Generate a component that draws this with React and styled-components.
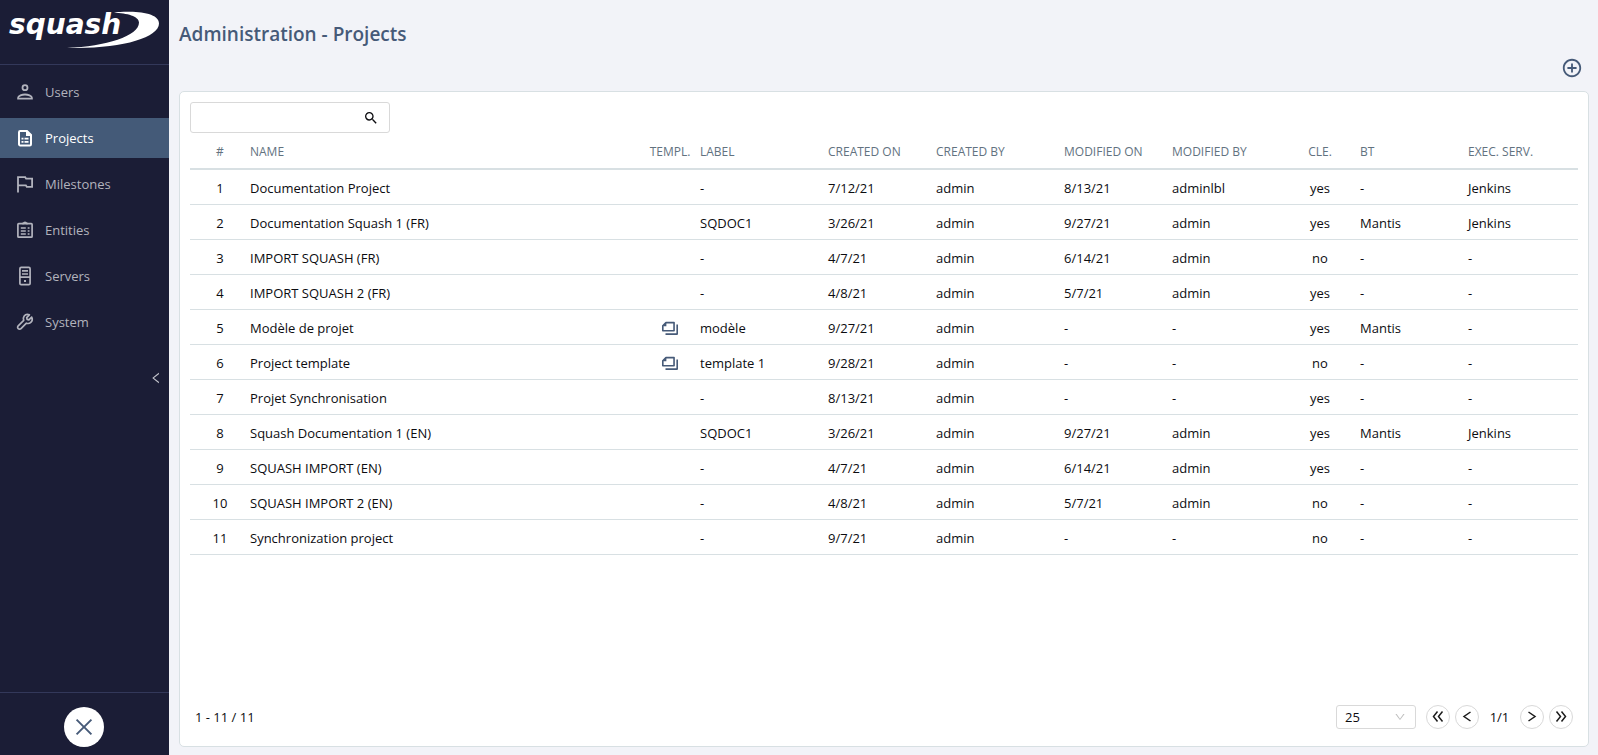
import styled, { createGlobalStyle } from "styled-components";
import { AiOutlineClose, AiOutlineLeft, AiOutlineDown } from "react-icons/ai";
import { MdSearch, MdAddCircleOutline } from "react-icons/md";

const colors = {
  navy: "#1b1d36",
  navyLine: "#33385a",
  active: "#445a78",
  primary: "#465a78",
  page: "#f2f3f8",
  line: "#d8e0e3",
  control: "#d9d9d9",
  heading: "#62727f",
  text: "#0c0c10",
};

const GlobalStyle = createGlobalStyle`
  * {
    box-sizing: border-box;
  }

  body {
    margin: 0;
    background: ${colors.page};
    color: ${colors.text};
    font-family: "Open Sans", "Noto Sans", sans-serif;
    font-size: 13px;
    line-height: 20px;
  }

  button, input, select {
    font: inherit;
    color: inherit;
  }
`;

const Layout = styled.div`
  display: grid;
  grid-template-columns: 169px 1fr;
  min-height: 100vh;
`;

const Sidebar = styled.aside`
  display: flex;
  flex-direction: column;
  background: ${colors.navy};
`;

const Brand = styled.a`
  display: block;
  height: 65px;
  padding: 4px 3px;
  border-bottom: 1px solid ${colors.navyLine};

  svg {
    display: block;
  }
`;

const Nav = styled.nav`
  display: flex;
  flex-direction: column;
  gap: 6px;
  padding-top: 7px;
`;

const NavItem = styled.a`
  display: flex;
  align-items: center;
  gap: 10px;
  height: 40px;
  padding: 0 15px;
  color: ${({ $active }) => ($active ? "#fff" : "#b2b3bd")};
  background: ${({ $active }) => ($active ? colors.active : "transparent")};
  text-decoration: none;
`;

const IconButton = styled.button`
  display: flex;
  align-items: center;
  justify-content: center;
  padding: 0;
  border: none;
  background: none;
  cursor: pointer;
`;

const CollapseButton = styled(IconButton)`
  align-self: flex-end;
  margin: 24px 5px 0 0;
  width: 16px;
  height: 24px;
  color: #c4c5cd;
`;

const SidebarFooter = styled.div`
  display: flex;
  justify-content: center;
  margin-top: auto;
  padding: 14px 1px 8px 0;
  border-top: 1px solid ${colors.navyLine};
`;

const CloseButton = styled(IconButton)`
  width: 40px;
  height: 40px;
  border-radius: 50%;
  background: #fff;
  color: ${colors.primary};
`;

const Main = styled.main`
  display: flex;
  flex-direction: column;
  min-width: 0;
  padding: 20px 9px 8px 10px;
`;

const Title = styled.h1`
  margin: 0;
  color: ${colors.primary};
  font-size: 19px;
  font-weight: 600;
  line-height: 28px;
`;

const Toolbar = styled.div`
  display: flex;
  justify-content: flex-end;
  padding: 9px 6px 12px;
  color: ${colors.primary};
`;

const Panel = styled.section`
  flex: 1;
  display: flex;
  flex-direction: column;
  padding: 10px;
  background: #fff;
  border: 1px solid ${colors.line};
  border-radius: 5px;
`;

const SearchBox = styled.label`
  display: flex;
  align-items: center;
  width: 200px;
  height: 31px;
  padding: 0 10px;
  border: 1px solid ${colors.control};
  border-radius: 3px;
`;

const SearchInput = styled.input`
  flex: 1;
  min-width: 0;
  border: none;
  outline: none;
  background: none;
`;

const Table = styled.table`
  width: 100%;
  table-layout: fixed;
  border-collapse: separate;
  border-spacing: 0;
`;

const HeadCell = styled.th`
  height: 37px;
  padding: 2px 0 0;
  border-bottom: 2px solid ${colors.line};
  color: ${colors.heading};
  font-size: 12px;
  font-weight: 500;
  text-align: ${({ $center }) => ($center ? "center" : "left")};
  white-space: nowrap;
`;

const Cell = styled.td`
  height: 35px;
  padding: 2px 0 0;
  border-bottom: 1px solid ${colors.line};
  text-align: ${({ $center }) => ($center ? "center" : "left")};
  white-space: nowrap;

  svg {
    display: block;
    margin: 0 auto;
    color: ${colors.primary};
  }
`;

const Footer = styled.footer`
  display: flex;
  align-items: center;
  justify-content: space-between;
  margin-top: auto;
  padding: 0 5px 7px;
`;

const Pager = styled.div`
  display: flex;
  align-items: center;
  gap: 5px;
`;

const PageSize = styled.div`
  display: grid;
  align-items: center;
  width: 80px;
  margin-right: 5px;

  select,
  svg {
    grid-area: 1 / 1;
  }

  svg {
    justify-self: end;
    margin-right: 10px;
    color: #bfbfbf;
    pointer-events: none;
  }
`;

const SizeSelect = styled.select`
  width: 100%;
  height: 24px;
  padding: 0 8px;
  border: 1px solid ${colors.control};
  border-radius: 3px;
  background: #fff;
  appearance: none;
`;

const PageButton = styled(IconButton)`
  width: 24px;
  height: 24px;
  border: 1px solid ${colors.control};
  border-radius: 50%;
  color: #1c1c1c;
`;

const PageCount = styled.span`
  width: 31px;
  text-align: center;
`;

const Logo = () => (
  <svg width="161" height="48" viewBox="-2 -6 161 48" role="img" aria-label="squash">
    <text
      x="4"
      y="24"
      fill="#fff"
      fontFamily="DejaVu Sans, sans-serif"
      fontSize="28"
      fontWeight="700"
      fontStyle="oblique"
    >
      squash
    </text>
    <path
      fill="#fff"
      d="M109 2.400C126 1 154 1.500 154 13.500C154 28 114 39.500 62 37.800C101 36.500 134 26 134 12.500C134 6 122 3.200 109 2.400Z"
    />
  </svg>
);

const Glyph = ({ children, size = 20, weight = 1.8 }) => (
  <svg
    width={size}
    height={size}
    viewBox="0 0 20 20"
    fill="none"
    stroke="currentColor"
    strokeWidth={weight}
    aria-hidden="true"
  >
    {children}
  </svg>
);

const UserIcon = () => (
  <Glyph>
    <circle cx="10" cy="5.700" r="2.500" />
    <path d="M3.100 16.600v-.9c0-1.900 4.100-3.200 6.900-3.200s6.900 1.300 6.900 3.200v.9z" />
  </Glyph>
);

const ProjectIcon = () => (
  <Glyph weight={2}>
    <path d="M12 3H5.200A1.200 1.200 0 0 0 4 4.200v12A1.200 1.200 0 0 0 5.200 17.400h9.600a1.200 1.200 0 0 0 1.200-1.200V7z" />
    <path d="M11 2.500v5.500h5.500z" fill="currentColor" stroke="none" />
    <path d="M6.500 10.700h2M9.500 10.700h4M6.500 13.900h2M9.500 13.900h4" strokeWidth="1.700" />
  </Glyph>
);

const FlagIcon = () => (
  <Glyph>
    <path d="M3 18.500V3.200h7.200l.9 1.500h6v8.200h-5.300l-.9-1.600H3" />
  </Glyph>
);

const EntityIcon = () => (
  <Glyph weight={1.7}>
    <rect x="2.900" y="3.700" width="14.200" height="13.500" rx="0.800" />
    <path d="M7 3.500h1.400a1.700 1.700 0 0 1 3.200 0H13" />
    <path
      d="M5.800 8h5M12.700 8h1.800M5.800 11h5M12.700 11h1.800M5.800 14h5M12.700 14h1.800"
      strokeWidth="1.300"
    />
  </Glyph>
);

const ServerIcon = () => (
  <Glyph weight={1.7}>
    <rect x="4.900" y="1.400" width="10.200" height="17.300" rx="1.300" />
    <path d="M4.800 11.200h10.400M7 4.900h6M7 8h6" />
    <path d="M9 14h2v2H9z" fill="currentColor" stroke="none" />
  </Glyph>
);

const WrenchIcon = () => (
  <Glyph weight={1.7}>
    <path
      strokeLinejoin="round"
      d="M16.700 5.100l-2.800 2.700-1.800-.4-.4-1.800 2.700-2.700c-2-.9-4.100-.3-5.200 1.100-1 1.300-1 3-.5 4.400l-5.500 5.400a1.900 1.900 0 0 0 2.800 2.800l5.400-5.400c1.500.5 3.200.3 4.400-.8 1.400-1.200 1.800-3.300.9-5.300z"
    />
  </Glyph>
);

const TemplateIcon = () => (
  <Glyph size={18} weight={1.8}>
    <path d="M5.500 4H14.500v9H2V7.500z" strokeLinejoin="round" />
    <path d="M6 3.500v4.500H1.500z" fill="currentColor" stroke="none" />
    <path d="M18 6v10.800H5" strokeLinejoin="round" />
  </Glyph>
);

const Arrow = ({ double, right }) => (
  <svg
    width="14"
    height="14"
    viewBox="0 0 14 14"
    fill="none"
    stroke="currentColor"
    strokeWidth="1.500"
    aria-hidden="true"
  >
    {!double && <path d={right ? "M3.500 2l6.500 4.500L3.500 11" : "M10.500 2L4 6.500l6.500 4.500"} />}
    {double && (
      <path
        d={
          right
            ? "M2.500 1.500l4 5-4 5M7.500 1.500l4 5-4 5"
            : "M6.500 1.500l-4 5 4 5M11.500 1.500l-4 5 4 5"
        }
      />
    )}
  </svg>
);

const menu = [
  { label: "Users", Icon: UserIcon },
  { label: "Projects", Icon: ProjectIcon, active: true },
  { label: "Milestones", Icon: FlagIcon },
  { label: "Entities", Icon: EntityIcon },
  { label: "Servers", Icon: ServerIcon },
  { label: "System", Icon: WrenchIcon },
];

const columns = [
  { key: "id", label: "#", width: 60, center: true },
  { key: "name", label: "NAME" },
  { key: "template", label: "TEMPL.", width: 60, center: true },
  { key: "label", label: "LABEL", width: 128 },
  { key: "createdOn", label: "CREATED ON", width: 108 },
  { key: "createdBy", label: "CREATED BY", width: 128 },
  { key: "modifiedOn", label: "MODIFIED ON", width: 108 },
  { key: "modifiedBy", label: "MODIFIED BY", width: 108 },
  { key: "clearance", label: "CLE.", width: 80, center: true },
  { key: "bugtracker", label: "BT", width: 108 },
  { key: "execServer", label: "EXEC. SERV.", width: 110 },
];

const projects = [
  ["Documentation Project", false, "-", "7/12/21", "admin", "8/13/21", "adminlbl", "yes", "-", "Jenkins"],
  ["Documentation Squash 1 (FR)", false, "SQDOC1", "3/26/21", "admin", "9/27/21", "admin", "yes", "Mantis", "Jenkins"],
  ["IMPORT SQUASH (FR)", false, "-", "4/7/21", "admin", "6/14/21", "admin", "no", "-", "-"],
  ["IMPORT SQUASH 2 (FR)", false, "-", "4/8/21", "admin", "5/7/21", "admin", "yes", "-", "-"],
  ["Modèle de projet", true, "modèle", "9/27/21", "admin", "-", "-", "yes", "Mantis", "-"],
  ["Project template", true, "template 1", "9/28/21", "admin", "-", "-", "no", "-", "-"],
  ["Projet Synchronisation", false, "-", "8/13/21", "admin", "-", "-", "yes", "-", "-"],
  ["Squash Documentation 1 (EN)", false, "SQDOC1", "3/26/21", "admin", "9/27/21", "admin", "yes", "Mantis", "Jenkins"],
  ["SQUASH IMPORT (EN)", false, "-", "4/7/21", "admin", "6/14/21", "admin", "yes", "-", "-"],
  ["SQUASH IMPORT 2 (EN)", false, "-", "4/8/21", "admin", "5/7/21", "admin", "no", "-", "-"],
  ["Synchronization project", false, "-", "9/7/21", "admin", "-", "-", "no", "-", "-"],
];

const renderValue = (value) => {
  if (value === true) return <TemplateIcon />;
  return value || null;
};

export default function App() {
  return (
    <>
      <GlobalStyle />
      <Layout>
        <Sidebar>
          <Brand href="#home">
            <Logo />
          </Brand>
          <Nav aria-label="Administration">
            {menu.map(({ label, Icon, active }) => (
              <NavItem key={label} href={`#${label.toLowerCase()}`} $active={active}>
                <Icon />
                {label}
              </NavItem>
            ))}
          </Nav>
          <CollapseButton type="button" aria-label="Collapse menu">
            <AiOutlineLeft size={14} />
          </CollapseButton>
          <SidebarFooter>
            <CloseButton type="button" aria-label="Close administration">
              <AiOutlineClose size={24} />
            </CloseButton>
          </SidebarFooter>
        </Sidebar>

        <Main>
          <Title>Administration - Projects</Title>
          <Toolbar>
            <IconButton type="button" aria-label="Add project">
              <MdAddCircleOutline size={22} />
            </IconButton>
          </Toolbar>
          <Panel>
            <SearchBox>
              <SearchInput type="text" aria-label="Search projects" />
              <MdSearch size={16} />
            </SearchBox>
            <Table>
              <colgroup>
                {columns.map(({ key, width }) => (
                  <col key={key} width={width} />
                ))}
              </colgroup>
              <thead>
                <tr>
                  {columns.map(({ key, label, center }) => (
                    <HeadCell key={key} scope="col" $center={center}>
                      {label}
                    </HeadCell>
                  ))}
                </tr>
              </thead>
              <tbody>
                {projects.map((project, row) => (
                  <tr key={project[0]}>
                    {[row + 1, ...project].map((value, i) => (
                      <Cell key={columns[i].key} $center={columns[i].center}>
                        {renderValue(value)}
                      </Cell>
                    ))}
                  </tr>
                ))}
              </tbody>
            </Table>
            <Footer>
              <span>1 - 11 / 11</span>
              <Pager>
                <PageSize>
                  <SizeSelect aria-label="Rows per page" defaultValue="25">
                    <option>10</option>
                    <option>25</option>
                    <option>50</option>
                    <option>100</option>
                  </SizeSelect>
                  <AiOutlineDown size={12} />
                </PageSize>
                <PageButton type="button" aria-label="First page">
                  <Arrow double />
                </PageButton>
                <PageButton type="button" aria-label="Previous page">
                  <Arrow />
                </PageButton>
                <PageCount>1/1</PageCount>
                <PageButton type="button" aria-label="Next page">
                  <Arrow right />
                </PageButton>
                <PageButton type="button" aria-label="Last page">
                  <Arrow double right />
                </PageButton>
              </Pager>
            </Footer>
          </Panel>
        </Main>
      </Layout>
    </>
  );
}
